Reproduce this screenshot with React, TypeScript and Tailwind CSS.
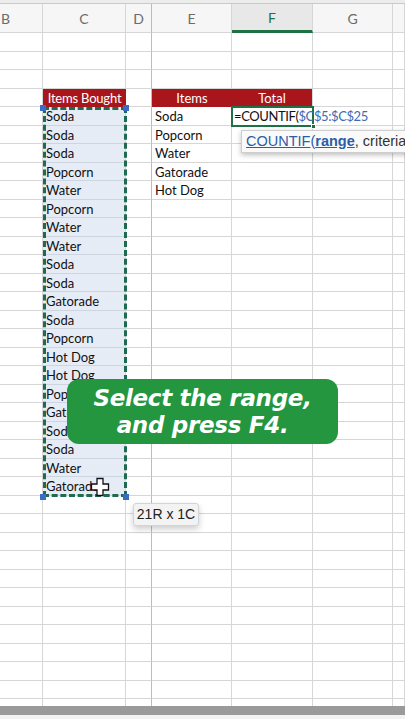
import React from 'react';

const bought = [
  'Soda', 'Soda', 'Soda', 'Popcorn', 'Water', 'Popcorn', 'Water', 'Water', 'Soda', 'Soda',
  'Gatorade', 'Soda', 'Popcorn', 'Hot Dog', 'Hot Dog', 'Popcorn', 'Gatorade', 'Soda', 'Soda',
  'Water', 'Gatorade',
];

const items = ['Soda', 'Popcorn', 'Water', 'Gatorade', 'Hot Dog'];

const cols = 'grid grid-cols-[43px_83px_26px_80px_81px_80px_1fr]';

function Row({ n }: { n: number }) {
  const inSel = n >= 5 && n <= 25;
  const cell = 'border-r border-b border-[#d6d6d6] h-[18.5px] px-[3px] leading-[18px] whitespace-nowrap overflow-hidden';

  if (n === 4) {
    return (
      <div className={cols}>
        <div className={cell} />
        <div className="h-[18.5px] bg-[#a8161c] text-white text-center leading-[18px] border-b border-[#a8161c] tracking-[-0.2px]">Items Bought</div>
        <div className={`${cell} border-r-[#bcbcbc]`} />
        <div className="h-[18.5px] bg-[#a8161c] text-white text-center leading-[18px]">Items</div>
        <div className="h-[18.5px] bg-[#a8161c] text-white text-center leading-[18px] border-r border-[#d6d6d6]">Total</div>
        <div className={cell} />
        <div className={cell} />
      </div>
    );
  }

  return (
    <div className={cols}>
      <div className={cell} />
      <div className={`${cell} ${inSel ? 'bg-[#e6ecf5] border-b-[#cdd5e0] text-[#111]' : ''}`}>
        {inSel ? bought[n - 5] : ''}
      </div>
      <div className={`${cell} border-r-[#bcbcbc]`} />
      <div className={`${cell} text-[#111]`}>{n >= 5 && n <= 9 ? items[n - 5] : ''}</div>
      <div className={cell} />
      <div className={cell} />
      <div className={cell} />
    </div>
  );
}

export default function App() {
  const rows = Array.from({ length: 36 }, (_, i) => i + 1);
  const head = 'h-[29px] border-r border-b border-[#d6d6d6] flex items-center justify-center text-[#6b6b6b]';

  return (
    <div className="relative w-[405px] h-[720px] overflow-hidden bg-white text-[13px] font-['Lato','Open_Sans',sans-serif]">
      <div className="h-[4px] bg-[#ececec] border-b border-[#c9c9c9]" />
      <div className={`${cols} bg-[#f6f6f6] text-[14px]`}>
        <div className={`${head} justify-start pl-[1px]`}>B</div>
        <div className={head}>C</div>
        <div className={`${head} border-r-[#bcbcbc]`}>D</div>
        <div className={head}>E</div>
        <div className="h-[29px] border-r border-[#d6d6d6] border-b-[3px] border-b-[#1e7145] bg-[#e8e8e8] flex items-center justify-center text-[#1e7145]">F</div>
        <div className={head}>G</div>
        <div className={head} />
      </div>

      {rows.map((n) => (
        <Row key={n} n={n} />
      ))}

      <div className={cols}>
        {[0, 1, 2, 3, 4, 5, 6].map((i) => (
          <div key={i} className={`h-[7px] border-r ${i === 2 ? 'border-[#bcbcbc]' : 'border-[#d6d6d6]'}`} />
        ))}
      </div>
      <div className="h-[9px] bg-[#9a9a9a]" />
      <div className="h-[4px] bg-[#f2f2f2]" />

      {/* active cell F5 with formula */}
      <div className="absolute left-[231px] top-[106px] w-[83px] h-[21px] border-2 border-[#1e7145]" />
      <div className="absolute left-[311px] top-[124px] w-[5px] h-[5px] bg-[#1e7145] border border-white" />
      <div className="absolute left-[234px] top-[107px] h-[19px] leading-[19px] text-[13px] tracking-[-0.4px] whitespace-nowrap text-[#111]">
        =COUNTIF(<span className="text-[#3d6bb3]">$C$5:$C$25</span>
      </div>

      {/* function hint */}
      <div className="absolute left-[241px] top-[130px] w-[180px] h-[23px] bg-[#fafafa] border border-[#cfcfcf] shadow-[0_2px_5px_rgba(0,0,0,0.25)] px-[4px] leading-[21px] text-[14.5px] whitespace-nowrap text-[#333] font-['Liberation_Sans',sans-serif]">
        <span className="text-[#2b5ea7] underline">COUNTIF</span>
        <span className="text-[#2b5ea7]">(</span>
        <span className="text-[#2b5ea7] font-bold underline">range</span>, criteria
      </div>

      {/* selected range */}
      <div className="absolute left-[43px] top-[107px] w-[84px] h-[390px] border-[3px] border-dashed border-[#1f6b50]" />
      <div className="absolute left-[40px] top-[105px] w-[6px] h-[6px] bg-[#3a6cc4]" />
      <div className="absolute left-[123px] top-[105px] w-[6px] h-[6px] bg-[#3a6cc4]" />
      <div className="absolute left-[40px] top-[494px] w-[6px] h-[6px] bg-[#3a6cc4]" />
      <div className="absolute left-[123px] top-[494px] w-[6px] h-[6px] bg-[#3a6cc4]" />

      {/* cursor */}
      <svg className="absolute left-[90px] top-[477px]" width="20" height="20" viewBox="0 0 20 20">
        <path d="M7 1.5h6v5.5h5.5v6h-5.5v5.5h-6v-5.5h-5.5v-6h5.5z" fill="#fff" stroke="#111" strokeWidth="1.3" />
      </svg>

      {/* size hint */}
      <div className="absolute left-[133px] top-[503px] w-[66px] h-[23px] bg-[#f3f3f3] border border-[#d4d4d4] rounded-[3px] shadow-[0_3px_6px_rgba(0,0,0,0.2)] flex items-center justify-center text-[14px] text-[#222] font-['Liberation_Sans',sans-serif]">
        21R x 1C
      </div>

      {/* callout */}
      <div className="absolute left-[67px] top-[379px] w-[271px] h-[65px] rounded-[12px] bg-[#23963f] flex flex-col items-center justify-center text-white italic font-bold text-[23px] leading-[27px] tracking-[-0.3px] font-['DejaVu_Sans',sans-serif]">
        <div>Select the range,</div>
        <div>and press F4.</div>
      </div>
    </div>
  );
}
